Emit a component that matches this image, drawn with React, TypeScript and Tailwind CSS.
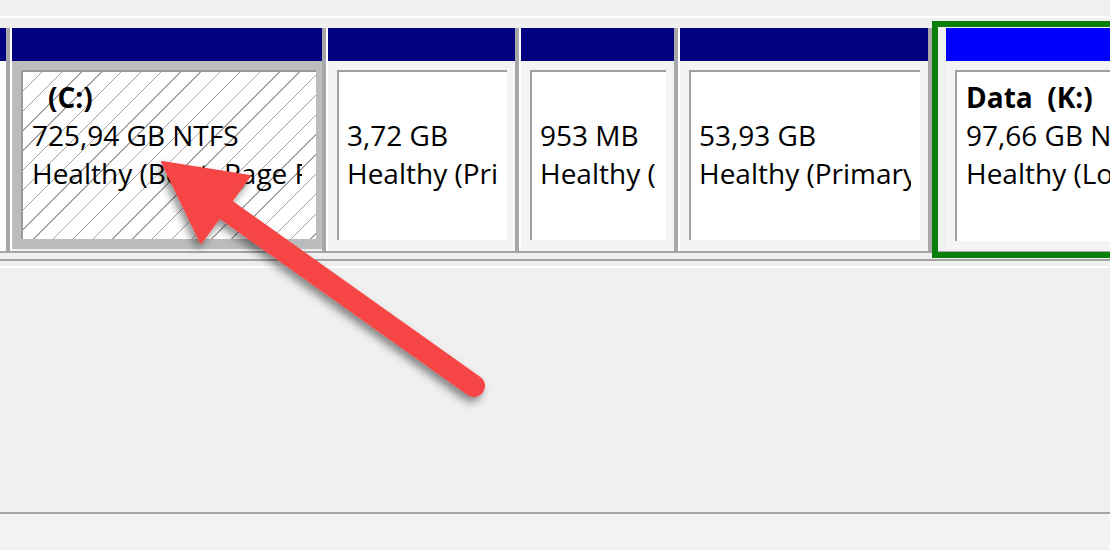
import React from "react";

type PartProps = {
  navy: string;
  lines: string[];
  label?: string;
};

function Sep() {
  return (
    <div className="flex shrink-0">
      <div className="w-[4px] bg-[#a7a7a7]" />
      <div className="w-[2px] bg-white" />
    </div>
  );
}

function Part({ navy, lines, label }: PartProps) {
  return (
    <div className={`flex flex-col shrink-0 ${navy}`}>
      <div className="h-[33px] bg-[#000080]" />
      <div className="flex-1 bg-[#f4f4f4] pl-[9px] pr-[8px] pt-[9px] pb-[11px]">
        <div className="h-full border-t-2 border-l-2 border-[#a0a0a0] bg-white pl-[8px] pr-[9px] pt-[6px]">
          <div className="overflow-hidden whitespace-nowrap leading-[38px]">
            <div className="font-bold">{label ?? "\u00a0"}</div>
            {lines.map((l) => (
              <div key={l}>{l}</div>
            ))}
          </div>
        </div>
      </div>
    </div>
  );
}

function Arrow() {
  return (
    <svg
      className="absolute inset-0 pointer-events-none"
      width="1110"
      height="550"
      viewBox="0 0 1110 550"
    >
      <defs>
        <filter id="shadow" x="-20%" y="-20%" width="140%" height="140%">
          <feDropShadow dx="-3" dy="5" stdDeviation="4" floodColor="#000" floodOpacity="0.45" />
        </filter>
      </defs>
      <g filter="url(#shadow)" fill="#f64545" stroke="#f64545">
        <line x1="474" y1="386" x2="215" y2="202" strokeWidth="22" strokeLinecap="round" />
        <polygon points="162,162 250,176 201,243" strokeWidth="2" strokeLinejoin="round" />
      </g>
    </svg>
  );
}

export default function App() {
  return (
    <div className="relative w-[1110px] h-[550px] overflow-hidden bg-[#f0f0f0] font-['Open_Sans',sans-serif] text-[28px] text-black">
      <div className="h-[16px]" />
      <div className="h-[2px] bg-white" />
      <div className="h-[10px]" />

      {/* disk row */}
      <div className="flex h-[225px] border-b-2 border-[#a5a5a5]">
        <div className="flex flex-col w-[6px] shrink-0">
          <div className="h-[33px] bg-[#000080]" />
          <div className="flex-1 bg-white" />
        </div>
        <Sep />

        {/* system drive, selected */}
        <div className="flex flex-col w-[310px] shrink-0">
          <div className="h-[33px] bg-[#000080]" />
          <div className="flex-1 -mr-[3px] mb-[2px] bg-[#bcbcbc] p-[9px] pb-[10px]">
            <div className="h-full border-t-2 border-l-2 border-[#9a9a9a] bg-[repeating-linear-gradient(135deg,#ffffff_0px,#ffffff_13px,#a3a3a3_13px,#a3a3a3_14px)] pl-[9px] pr-[14px] pt-[6px]">
              <div className="overflow-hidden whitespace-nowrap leading-[38px]">
                <div className="font-bold pl-[16px]">(C:)</div>
                <div>725,94 GB NTFS</div>
                <div>Healthy (Boot, Page File, Crash Dump, Primary Partition)</div>
              </div>
            </div>
          </div>
        </div>
        <Sep />

        <Part navy="w-[187px]" lines={["3,72 GB", "Healthy (Primary Partition)"]} />
        <Sep />
        <Part navy="w-[153px]" lines={["953 MB", "Healthy (Primary Partition)"]} />
        <Sep />
        <Part navy="w-[248px]" lines={["53,93 GB", "Healthy (Primary Partition)"]} />
        <div className="w-[4px] shrink-0 bg-[#a7a7a7]" />

        {/* data drive with focus frame */}
        <div className="flex flex-col flex-1 -mt-[7px] -mb-[7px] border-[6px] border-r-0 border-[#0a7f0a] pt-[1px] pl-[8px] pb-[1px]">
          <div className="h-[33px] bg-[#0000ff]" />
          <div className="flex-1 bg-[#f4f4f4] pl-[9px] pt-[9px] pb-[10px]">
            <div className="h-full border-t-2 border-l-2 border-[#a0a0a0] bg-white pl-[9px] pt-[6px]">
              <div className="overflow-hidden whitespace-nowrap leading-[38px]">
                <div className="font-bold">Data&nbsp;&nbsp;(K:)</div>
                <div>97,66 GB NTFS</div>
                <div>Healthy (Logical Drive)</div>
              </div>
            </div>
          </div>
        </div>
      </div>

      <div className="h-[6px]" />
      <div className="h-[2px] bg-[#a5a5a5]" />
      <div className="h-[5px]" />
      <div className="h-[2px] bg-white" />
      <div className="h-[244px]" />
      <div className="h-[2px] bg-[#a5a5a5]" />
      <div className="h-[33px] bg-[#f3f3f3]" />

      <Arrow />
    </div>
  );
}
